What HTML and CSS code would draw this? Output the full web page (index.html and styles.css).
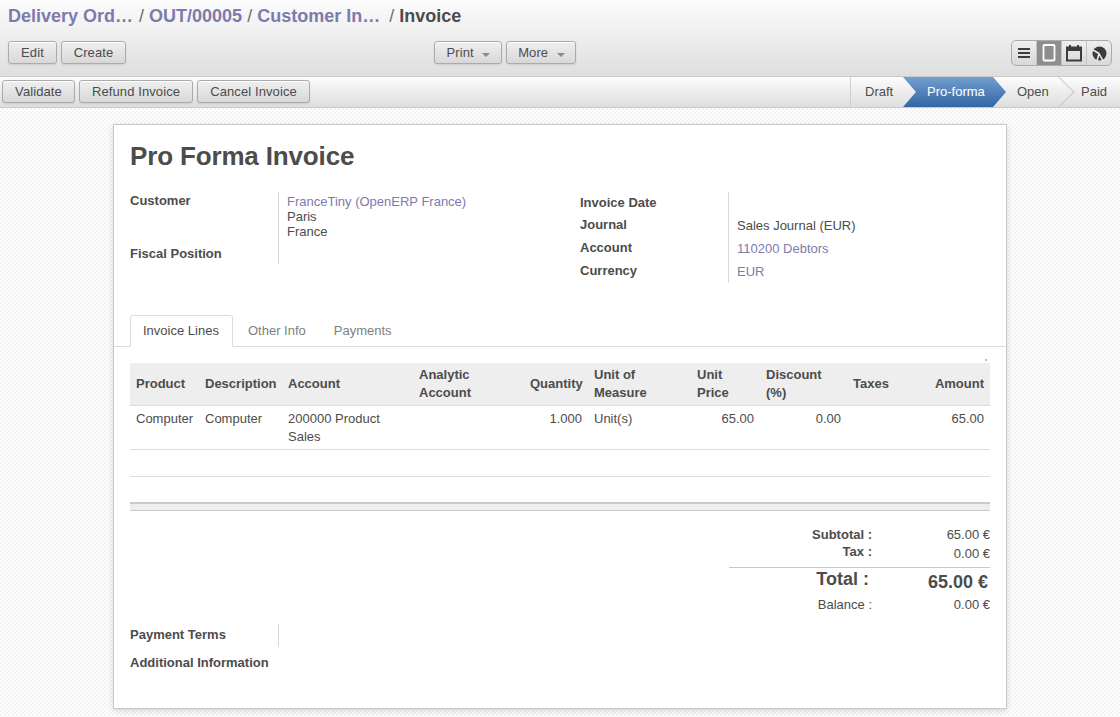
FILE: index.html
```html
<!DOCTYPE html>
<html lang="en">
<head>
    <meta charset="UTF-8">
    <title>Pro Forma Invoice</title>
    <link rel="stylesheet" href="styles.css">
</head>
<body>
    <header class="header">
        <h2 class="breadcrumb">
            <a>Delivery Ord…</a>
            <span class="sep sep-1">/</span>
            <a>OUT/00005</a>
            <span class="sep sep-2">/</span>
            <a>Customer In…</a>
            <span class="sep sep-3">/</span>
            <span class="current">Invoice</span>
        </h2>
        <div class="toolbar">
            <div class="toolbar-left">
                <button class="btn btn-edit">Edit</button>
                <button class="btn btn-create">Create</button>
            </div>
            <div class="toolbar-middle">
                <button class="btn btn-print">Print <span class="caret"></span></button>
                <button class="btn btn-more">More <span class="caret"></span></button>
            </div>
            <div class="switcher">
                <span class="switch">
                    <svg width="14" height="12" viewBox="0 0 14 12"><path d="M1 2h12M1 6h12M1 10h12" stroke="#3c3c3c" stroke-width="2"/></svg>
                </span>
                <span class="switch switch-active">
                    <svg width="14" height="18" viewBox="0 0 14 18"><rect x="1.500" y="1" width="11" height="15.500" rx="1" fill="none" stroke="#fff" stroke-width="1.800"/></svg>
                </span>
                <span class="switch">
                    <svg width="16" height="17" viewBox="0 0 16 17"><path d="M4 0v3M12 0v3" stroke="#3c3c3c" stroke-width="2"/><rect x="1" y="2.500" width="14" height="13" fill="none" stroke="#3c3c3c" stroke-width="2"/><rect x="1" y="2" width="14" height="4" fill="#3c3c3c"/></svg>
                </span>
                <span class="switch">
                    <svg width="15" height="15" viewBox="0 0 15 15"><circle cx="7.500" cy="7.500" r="7" fill="#3c3c3c"/><path d="M7 7.500L1 4M7 7.500L5 15M7 7.500L11 15" stroke="#efefef" stroke-width="1.500" fill="none"/></svg>
                </span>
            </div>
        </div>
    </header>

    <div class="statusbar">
        <div class="actions">
            <button class="btn btn-validate">Validate</button>
            <button class="btn btn-refund">Refund Invoice</button>
            <button class="btn btn-cancel">Cancel Invoice</button>
        </div>
        <div class="steps">
            <span class="step step-draft">Draft</span>
            <span class="step step-active">Pro-forma</span>
            <span class="step step-open">Open</span>
            <span class="step step-paid">Paid</span>
        </div>
    </div>

    <main class="content">
        <div class="sheet">
            <h1 class="title">Pro Forma Invoice</h1>

            <div class="groups">
                <div class="group group-left">
                    <div class="label label-customer">Customer</div>
                    <div class="value value-customer">
                        <a>FranceTiny (OpenERP France)</a><br>Paris<br>France
                    </div>
                    <div class="label label-fiscal">Fiscal Position</div>
                    <div class="value value-fiscal"></div>
                </div>
                <div class="group group-right">
                    <div class="label">Invoice Date</div>
                    <div class="value"></div>
                    <div class="label">Journal</div>
                    <div class="value">Sales Journal (EUR)</div>
                    <div class="label">Account</div>
                    <div class="value"><a>110200 Debtors</a></div>
                    <div class="label">Currency</div>
                    <div class="value"><a>EUR</a></div>
                </div>
            </div>

            <ul class="tabs">
                <li class="tab tab-active">Invoice Lines</li>
                <li class="tab">Other Info</li>
                <li class="tab">Payments</li>
            </ul>

            <div class="dot-row"><span class="dot"></span></div>

            <table class="lines">
                <thead>
                    <tr>
                        <th>Product</th>
                        <th>Description</th>
                        <th>Account</th>
                        <th>Analytic Account</th>
                        <th class="num">Quantity</th>
                        <th>Unit of Measure</th>
                        <th>Unit Price</th>
                        <th>Discount (%)</th>
                        <th>Taxes</th>
                        <th class="num">Amount</th>
                    </tr>
                </thead>
                <tbody>
                    <tr>
                        <td>Computer</td>
                        <td>Computer</td>
                        <td>200000 Product Sales</td>
                        <td></td>
                        <td class="num">1.000</td>
                        <td>Unit(s)</td>
                        <td class="num">65.00</td>
                        <td class="num">0.00</td>
                        <td></td>
                        <td class="num">65.00</td>
                    </tr>
                    <tr class="empty"><td colspan="10"></td></tr>
                </tbody>
            </table>
            <div class="lines-foot"></div>

            <div class="totals">
                <div class="total-row total-sub">
                    <span class="total-label">Subtotal :</span><span class="total-value">65.00 €</span>
                </div>
                <div class="total-row total-tax">
                    <span class="total-label">Tax :</span><span class="total-value">0.00 €</span>
                </div>
                <div class="total-row total-main">
                    <span class="total-label">Total :</span><span class="total-value">65.00 €</span>
                </div>
                <div class="total-row total-balance">
                    <span class="total-label">Balance :</span><span class="total-value">0.00 €</span>
                </div>
            </div>

            <div class="group group-bottom">
                <div class="label">Payment Terms</div>
                <div class="value"></div>
            </div>
            <div class="label label-additional">Additional Information</div>
        </div>
    </main>
</body>
</html>
```

FILE: styles.css
```css
* {
    box-sizing: border-box;
}
html, body {
    height: 717px;
    overflow: hidden;
}
body {
    margin: 0;
    font-family: "Liberation Sans", Arial, sans-serif;
    font-size: 13px;
    color: #4c4c4c;
    background: repeating-conic-gradient(#f3f3f3 0 25%, #fff 0 50%) 0 0 / 4px 4px;
}
a {
    color: #7c7bad;
}

/* header */
.header {
    height: 77px;
    padding: 7px 8px 0;
    background: linear-gradient(#fcfcfc, #dedede);
    border-bottom: 1px solid #cacaca;
}
.breadcrumb {
    margin: 0;
    height: 20px;
    font-size: 18px;
    line-height: 18px;
    font-weight: bold;
    color: #7c7bad;
    white-space: nowrap;
    display: flex;
}
.sep {
    font-weight: normal;
    color: #6e6e6e;
    margin: 0 5px 0 6px;
}
.sep-2 {
    margin: 0 5px 0 5px;
}
.sep-3 {
    margin: 0 5px 0 9px;
}
.current {
    color: #4c4c4c;
}
.toolbar {
    display: flex;
    margin-top: 13px;
    position: relative;
}
.toolbar-left {
    display: flex;
    gap: 4px;
    width: 426px;
    padding-top: 1px;
}
.toolbar-middle {
    display: flex;
    gap: 4px;
    width: 577px;
    padding-top: 1px;
}
.btn {
    height: 23px;
    padding: 0;
    font-family: inherit;
    font-size: 13px;
    letter-spacing: 0.1px;
    color: #4c4c4c;
    background: linear-gradient(#efefef, #d8d8d8);
    border: 1px solid #ababab;
    border-radius: 3px;
    box-shadow: 0 1px 2px rgba(0, 0, 0, 0.1), inset 0 1px 0 #fff;
    white-space: nowrap;
}
.btn-edit {
    width: 49px;
}
.btn-create {
    width: 65px;
}
.btn-print {
    width: 68px;
    padding-left: 1px;
}
.btn-more {
    width: 70px;
    padding-left: 1px;
}
.btn-validate {
    width: 73px;
}
.btn-refund {
    width: 114px;
}
.btn-cancel {
    width: 113px;
}
.caret {
    display: inline-block;
    margin-left: 5px;
    vertical-align: 0;
    border-top: 4px solid #8a8a8a;
    border-left: 4px solid transparent;
    border-right: 4px solid transparent;
}
.switcher {
    display: flex;
    width: 101px;
    height: 26px;
    border: 1px solid #ababab;
    border-radius: 5px;
    overflow: hidden;
    background: linear-gradient(#efefef, #d8d8d8);
}
.switch {
    flex: 1;
    display: flex;
    align-items: center;
    justify-content: center;
    border-left: 1px solid #c4c4c4;
}
.switch:first-child {
    border-left: none;
}
.switch-active {
    background: #8e8e8e;
}

/* status bar */
.statusbar {
    height: 31px;
    display: flex;
    justify-content: space-between;
    background: linear-gradient(#fcfcfc, #dedede);
    border-bottom: 1px solid #cacaca;
}
.actions {
    display: flex;
    gap: 4px;
    padding: 3px 0 0 2px;
}
.steps {
    display: flex;
    width: 270px;
    height: 30px;
}
.step {
    line-height: 29px;
    white-space: nowrap;
}
.step-draft {
    width: 53px;
    padding-left: 14px;
    border-left: 1px solid #cfcfcf;
}
.step-active {
    width: 103px;
    padding-left: 24px;
    color: #fff;
    background: linear-gradient(#729fcf, #3465a4);
    clip-path: polygon(0 0, 90px 0, 103px 50%, 90px 100%, 0 100%, 13px 50%);
}
.step-open {
    width: 75px;
    padding-left: 11px;
    position: relative;
}
.step-open::after {
    content: "";
    position: absolute;
    top: 4px;
    left: 42px;
    width: 21px;
    height: 21px;
    border-top: 1px solid #c8c8c8;
    border-right: 1px solid #c8c8c8;
    transform: rotate(45deg);
}

/* sheet */
.content {
    padding: 16px 113px 0;
}
.sheet {
    height: 585px;
    width: 894px;
    padding: 15px 16px 0;
    background: #fff;
    border: 1px solid #c8c8d3;
    box-shadow: 0 2px 6px rgba(0, 0, 0, 0.15);
}
.title {
    margin: 0;
    height: 52px;
    font-size: 26px;
    line-height: 33px;
    letter-spacing: -0.15px;
    color: #4c4c4c;
}
.groups {
    display: flex;
    height: 123px;
}
.group {
    display: grid;
    grid-template-columns: 148px 1fr;
}
.group-left {
    width: 450px;
    height: 72px;
    grid-template-rows: 53px 19px;
}
.group-right {
    width: 410px;
    height: 91px;
    grid-template-rows: 22px 23px 23px 23px;
    align-self: start;
}
.label {
    font-weight: bold;
    line-height: 15px;
    padding-top: 3px;
}
.group-right .label {
    padding-top: 3px;
}
.label-customer {
    padding-top: 1px;
}
.label-fiscal {
    padding-top: 1px;
}
.value {
    border-left: 1px solid #d8d8d8;
    padding: 4px 0 0 8px;
    line-height: 15px;
}
.value-customer {
    padding-top: 2px;
}
.tabs {
    list-style: none;
    display: flex;
    margin: 0 -16px;
    padding: 0 0 0 16px;
    height: 32px;
    border-bottom: 1px solid #dcdcdc;
}
.tab {
    height: 32px;
    padding: 8px 14px 0;
    color: #808080;
}
.tab-active {
    width: 103px;
    padding: 7px 0 0 12px;
    margin-right: 1px;
    color: #4c4c4c;
    background: #fff;
    border: 1px solid #dcdcdc;
    border-bottom-color: #fff;
    border-radius: 3px 3px 0 0;
}
.dot-row {
    display: flex;
    justify-content: flex-end;
    height: 16px;
    padding: 12px 3px 0 0;
}
.dot {
    width: 2px;
    height: 2px;
    background: #bbb;
}

/* invoice lines */
.lines {
    width: 860px;
    table-layout: fixed;
    border-collapse: collapse;
    line-height: 18px;
}
.lines th {
    height: 42px;
    padding: 0 6px;
    text-align: left;
    background: #eeeeee;
    border-bottom: 1px solid #dcdcdc;
}
.lines td {
    height: 44px;
    padding: 4px 6px 0;
    vertical-align: top;
    border-bottom: 1px solid #dcdcdc;
}
.lines .num {
    text-align: right;
}
.lines tr.empty td {
    height: 27px;
    padding: 0;
}
.lines th:nth-child(1) { width: 69px; }
.lines th:nth-child(2) { width: 83px; }
.lines th:nth-child(3) { width: 131px; }
.lines th:nth-child(4) { width: 111px; }
.lines th:nth-child(5) { width: 64px; }
.lines th:nth-child(6) { width: 103px; }
.lines th:nth-child(7) { width: 69px; }
.lines th:nth-child(8) { width: 87px; }
.lines th:nth-child(9) { width: 48px; }
.lines th:nth-child(10) { width: 95px; }
.lines-foot {
    width: 860px;
    height: 9px;
    margin-top: 25px;
    background: #eeeeee;
    border-top: 2px solid #cacaca;
    border-bottom: 1px solid #cacaca;
}

/* totals */
.totals {
    margin: 15px 0 0 599px;
    width: 261px;
}
.total-row {
    display: flex;
    line-height: 17px;
}
.total-label {
    width: 143px;
    text-align: right;
    font-weight: bold;
}
.total-value {
    width: 118px;
    text-align: right;
}
.total-sub {
    height: 17px;
}
.total-tax {
    height: 25px;
    border-bottom: 1px solid #c8c8c8;
}
.total-tax .total-value {
    padding-top: 2px;
}
.total-main {
    height: 28px;
    font-size: 18px;
    padding-top: 2px;
}
.total-main .total-label {
    width: 140px;
    line-height: 18px;
}
.total-main .total-value {
    width: 119px;
    font-weight: bold;
    padding-top: 3px;
    line-height: 18px;
}
.total-balance .total-label {
    font-weight: normal;
}
.group-bottom {
    margin-top: 11px;
    height: 23px;
    width: 450px;
}
.label-additional {
    margin-top: 5px;
}
```
